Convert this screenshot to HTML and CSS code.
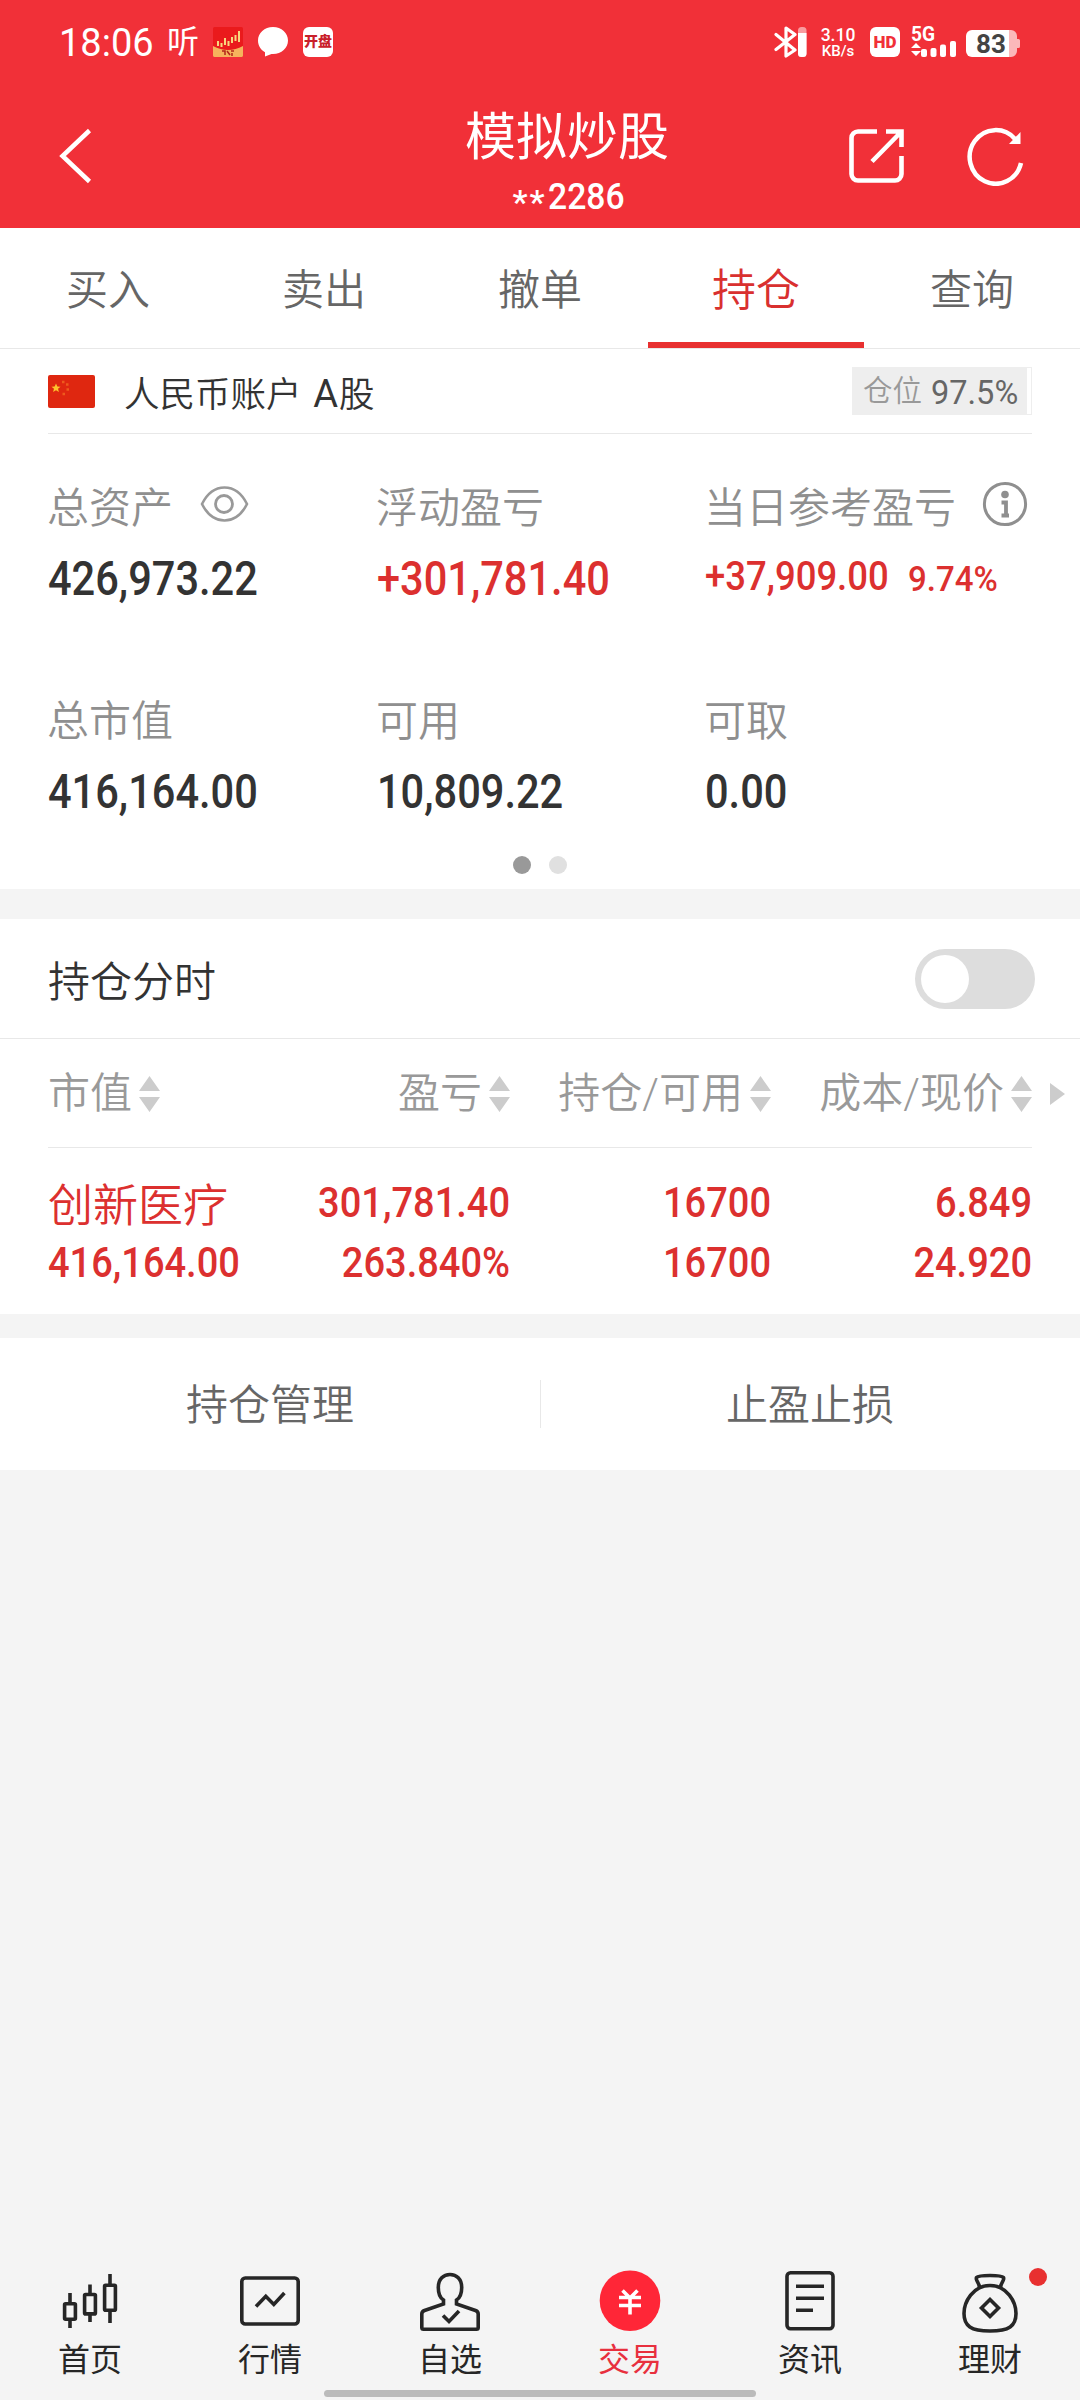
FILE: index.html
```html
<!DOCTYPE html>
<html lang="zh-CN">
<head>
<meta charset="utf-8">
<title>模拟炒股</title>
<link rel="stylesheet" href="styles.css">
</head>
<body>
<header class="top">
  <div class="status">
    <div class="status-left">
      <span class="clock">18:06</span>
      <span class="listen">听</span>
      <svg class="app" viewBox="0 0 30 30"><rect width="30" height="30" rx="1.5" fill="#ea1a1c"/><path d="M0 19Q15 27 30 19V28.500Q30 30 28.500 30H1.500Q0 30 0 28.500Z" fill="#f6b35c"/><path d="M5 14v5M8.500 16v4M12 11v7M15.500 14v5M19 10v6M22.500 8v6M26 4v11" stroke="#f8d77e" stroke-width="2"/><path d="M9 24h3v4M14 24l3 4M18 24h3M19 26v3" stroke="#b3261a" stroke-width="1.500" fill="none"/></svg>
      <svg class="app" viewBox="0 0 30 30"><path d="M15 0C6.500 0 0 6 0 13.500 0 19 3 23 7 25.200V29.500L13.500 27H15C23.500 27 30 21 30 13.500S23.500 0 15 0Z" fill="#fff"/></svg>
      <span class="app kaipan">开盘</span>
    </div>
    <div class="status-right">
      <svg width="34" height="32" viewBox="0 0 34 32"><path d="M2 8.500L21 24 12 30V2l9 6.500L2 23.500" fill="none" stroke="#fff" stroke-width="3.200" stroke-linejoin="round" stroke-linecap="round"/><rect x="24" y="1" width="8.500" height="30" rx="3.500" fill="#f99b9f"/><path d="M24 7h8.500v20.500a3.500 3.500 0 0 1-3.500 3.500h-1.500a3.500 3.500 0 0 1-3.500-3.500Z" fill="#fff"/></svg>
      <span class="speed"><b>3.10</b><b>KB/s</b></span>
      <span class="hd">HD</span>
      <svg class="signal" width="46" height="44" viewBox="0 -6 46 44"><text x="0" y="15" class="fiveg" textLength="24" lengthAdjust="spacingAndGlyphs">5G</text><path d="M0 22l5-5 5 5ZM0 25l5 5 5-5Z" fill="#fff"/><rect x="10" y="23" width="6" height="8" rx="2" fill="#fff"/><rect x="19.500" y="22" width="6" height="9" rx="2" fill="#fff"/><rect x="29" y="18.500" width="6" height="12.500" rx="2" fill="#fff"/><rect x="39" y="15" width="6" height="16" rx="2" fill="#fff"/></svg>
      <svg width="55" height="32" viewBox="0 0 55 32"><path d="M43 4h2a6 6 0 0 1 6 6v3h1.500a1.500 1.500 0 0 1 1.500 1.500v6a1.500 1.500 0 0 1-1.500 1.500H51v3a6 6 0 0 1-6 6h-2Z" fill="#fbb8ba"/><path d="M6 4h37v27H6a6 6 0 0 1-6-6V10a6 6 0 0 1 6-6Z" fill="#fff"/><text x="10" y="27" class="level" textLength="30">83</text></svg>
    </div>
  </div>
  <div class="bar">
    <svg class="back" width="36" height="60" viewBox="0 0 36 60"><path d="M31.500 4.500L4.500 30l27 25.500" fill="none" stroke="#fff" stroke-width="4.500"/></svg>
    <div class="heading"><h1>模拟炒股</h1><p><i>**</i><span class="num sub">2286</span></p></div>
    <svg class="share" width="56" height="56" viewBox="0 0 56 56"><path d="M28 3.500H9a6.500 6.500 0 0 0-6.500 6.500v36A6.500 6.500 0 0 0 9 52.500h37a6.500 6.500 0 0 0 6.500-6.500V28M37 3.500h15.500V19M52.500 3.500L23 33.500" fill="none" stroke="#fff" stroke-width="4.600"/></svg>
    <svg class="refresh" width="60" height="60" viewBox="0 0 60 60"><path d="M54 37A26 26.800 0 1 1 48 13" fill="none" stroke="#fff" stroke-width="4.500"/><path d="M53.500 6v12H42Z" fill="#fff"/></svg>
  </div>
</header>

<nav class="tabs"><a>买入</a><a>卖出</a><a>撤单</a><a class="on">持仓</a><a>查询</a></nav>

<section class="panel">
  <div class="account">
    <svg class="flag" width="47" height="33" viewBox="0 0 47 33"><rect width="47" height="33" rx="2" fill="#df2710"/><path d="M8 8.500l1.300 3 3.200.2-2.500 2 .9 3.200L8 15.200l-2.900 1.700.9-3.200-2.500-2 3.200-.2Z" fill="#fdc32c"/><path d="M14 7h2.500M18 9.500h2.500M18.500 14.500H21M14.500 19H17" stroke="#ee5a1d" stroke-width="2.500"/></svg>
    <span class="name">人民币账户 <b>A</b>股</span>
    <span class="badge"><span class="badge-in">仓位<b>97.5%</b></span></span>
  </div>
  <div class="assets">
    <div class="cell"><div class="label">总资产<svg class="eye" width="49" height="38" viewBox="0 0 49 38"><path d="M2 19C8 7 16 2.500 24.500 2.500S41 7 47 19C41 31 33 35.500 24.500 35.500S8 31 2 19Z" fill="none" stroke="#999" stroke-width="2.600"/><circle cx="24" cy="19" r="8.500" fill="none" stroke="#999" stroke-width="2.800"/></svg></div><div class="value"><span class="num big">426,973.22</span></div></div>
    <div class="cell"><div class="label">浮动盈亏</div><div class="value red"><span class="num big">+301,781.40</span></div></div>
    <div class="cell"><div class="label">当日参考盈亏<svg class="info" width="46" height="46" viewBox="0 0 46 46"><circle cx="23" cy="23" r="20.600" fill="none" stroke="#8f8f8f" stroke-width="3"/><circle cx="23" cy="13.500" r="3.800" fill="#8f8f8f"/><path d="M19.500 21.500H24V34M19.500 34.500H27" fill="none" stroke="#8f8f8f" stroke-width="3.800"/></svg></div><div class="value red"><span class="num day">+37,909.00</span><span class="num pct">9.74%</span></div></div>
    <div class="cell"><div class="label">总市值</div><div class="value"><span class="num big">416,164.00</span></div></div>
    <div class="cell"><div class="label">可用</div><div class="value"><span class="num big">10,809.22</span></div></div>
    <div class="cell"><div class="label">可取</div><div class="value"><span class="num big">0.00</span></div></div>
  </div>
  <div class="dots"><i class="dot active"></i><i class="dot"></i></div>
</section>

<section class="holdings">
  <div class="toggle-row"><span>持仓分时</span><span class="switch"><i></i></span></div>
  <div class="grid head">
    <span>市值<svg class="sort" viewBox="0 0 21 36"><path d="M0 15L10.500 0 21 15ZM0 21h21L10.500 36Z"/></svg></span>
    <span>盈亏<svg class="sort" viewBox="0 0 21 36"><path d="M0 15L10.500 0 21 15ZM0 21h21L10.500 36Z"/></svg></span>
    <span>持仓/可用<svg class="sort" viewBox="0 0 21 36"><path d="M0 15L10.500 0 21 15ZM0 21h21L10.500 36Z"/></svg></span>
    <span>成本/现价<svg class="sort" viewBox="0 0 21 36"><path d="M0 15L10.500 0 21 15ZM0 21h21L10.500 36Z"/></svg></span>
    <svg class="more" viewBox="0 0 15 22"><path d="M0 0L15 11 0 22Z"/></svg>
  </div>
  <div class="grid stock">
    <span class="stock-name">创新医疗</span><span class="num">301,781.40</span><span class="num">16700</span><span class="num">6.849</span>
    <span class="num">416,164.00</span><span class="num">263.840%</span><span class="num">16700</span><span class="num">24.920</span>
  </div>
</section>

<section class="actions"><a>持仓管理</a><a>止盈止损</a></section>

<footer class="dock">
  <nav class="dock-nav">
    <a><svg viewBox="0 0 180 80"><rect x="64.600" y="43.800" width="10.800" height="15.400" rx="1"/><rect x="84.600" y="34.500" width="10.800" height="19.400" rx="1"/><rect x="104.600" y="25.200" width="10.800" height="25" rx="1"/><path d="M70 33v10M70 60v8M90 24.500v10M90 54v8M110 14v11M110 51v12"/></svg>首页</a>
    <a><svg viewBox="0 0 180 80"><rect x="61.800" y="18" width="56.400" height="46" rx="3.500"/><path d="M76 46.500l9.800-10.200 8 8.200 10.600-11.500"/></svg>行情</a>
    <a><svg viewBox="0 0 180 80"><path d="M83.500 40C80 38 78.300 33 78.300 27.500 78.300 19 83.500 14.500 90 14.500S101.700 19 101.700 27.500C101.700 33 100 38 96.500 40V44L115.500 50.500Q118.200 51.500 118.200 54V67.500Q118.200 69.200 116.500 69.200H63.500Q61.800 69.200 61.800 67.500V54Q61.800 51.500 64.500 50.500L83.500 44Z"/><path d="M83 55.500l6 6 10-10.500"/></svg>自选</a>
    <a class="on"><svg viewBox="0 0 180 80"><circle cx="90" cy="40.700" r="30.300"/><path d="M82.500 30.500l7.500 7.500 7.500-7.500M79 37.500h22M79 45.500h22M90 37v17.500"/></svg>交易</a>
    <a><svg viewBox="0 0 180 80"><rect x="67" y="12.800" width="46" height="56" rx="3.500"/><path d="M76 26.300h28M76 38.300h28M76 50.200h17"/></svg>资讯</a>
    <a><svg viewBox="0 0 180 80"><path d="M79.500 27.500C79.500 23 75 20 76.500 17.500 79 14.800 101 14.800 103.500 17.500 105 20 100.500 23 100.500 27.500"/><path d="M90 25.500C73 25.500 64 42 64 53.500 64 66 71 71 90 71S116 66 116 53.500C116 42 107 25.500 90 25.500ZM90 39.500l8.500 8.500-8.500 8.500-8.500-8.500Z"/></svg>理财<i class="unread"></i></a>
  </nav>
  <div class="home-bar"></div>
</footer>
</body>
</html>
```
FILE: styles.css
```css
* { box-sizing: border-box; margin: 0; padding: 0; }
body {
  width: 1080px; height: 2400px; display: flex; flex-direction: column;
  background: #f4f4f4; color: #333; overflow: hidden;
  font-family: Roboto, "Noto Sans CJK SC", sans-serif; font-size: 42px; font-weight: 350;
}
i, b { font-style: normal; font-weight: inherit; }
svg { display: block; flex: none; }
span { white-space: nowrap; }

.top { height: 228px; background: #f13038; color: #fff; }
.status { height: 84px; padding: 0 59px 0 59px; display: flex; justify-content: space-between; align-items: center; }
.status-left, .status-right { display: flex; align-items: center; }
.clock { width: 108px; font-size: 38px; font-weight: 400; padding-top: 2px; }
.listen { width: 46px; font-size: 32px; line-height: 32px; font-weight: 400; }
.app { width: 30px; height: 30px; margin-right: 15px; }
.kaipan { border-radius: 6px; background: #fff; color: #c9202a; font-size: 14px; font-weight: 900; line-height: 29px; text-align: center; }
.speed { width: 40px; margin-left: 10px; display: flex; flex-direction: column; font-size: 15px; line-height: 15px; font-weight: 500; text-align: center; }
.speed b:first-child { font-size: 17.500px; line-height: 18px; }
.hd { width: 30px; height: 30px; margin-left: 12px; border-radius: 6px; background: #fff; color: #f13038; font-size: 17px; line-height: 30px; font-weight: 900; text-align: center; }
.signal { margin-left: 11px; margin-right: 9px; }
.fiveg { fill: #fff; font-size: 20px; font-weight: 700; }
.level { fill: #444; font-size: 26px; font-weight: 700; }

.bar { height: 144px; display: flex; padding-left: 58px; }
.back { margin-top: 42px; }
.heading { width: 202px; margin-left: 372px; text-align: center; }
h1 { margin-top: 17px; font-size: 51px; line-height: 74px; font-weight: 400; white-space: nowrap; margin-left: -1px; }
.heading p { height: 40px; display: flex; align-items: center; padding-left: 45px; margin-top: 2px; font-size: 37px; font-weight: 500; line-height: 40px; }
.heading i { width: 37px; letter-spacing: 2px; padding-top: 10px; font-size: 34px; }
.share { margin: 44px 0 0 181px; }
.refresh { margin: 42px 0 0 62px; }

.num { display: inline-block; font-weight: 500; transform-origin: 0 50%; transform: scaleX(.91); }
.big { font-size: 47.500px; transform: scaleX(.875); }
.day { font-size: 41px; transform: scaleX(.89); }
.pct { font-size: 35.500px; transform: scaleX(.93); }

.tabs { height: 121px; display: grid; grid-template-columns: repeat(5, 1fr); background: #fff; border-bottom: 1px solid #e8e8e8; color: #666; }
.tabs a { text-align: center; line-height: 126px; height: 120px; }
.tabs .on { color: #d9302f; font-size: 44px; border-bottom: 6px solid #e83030; }

.panel { height: 540px; background: #fff; padding: 0 48px; }
.account { height: 85px; display: flex; align-items: center; border-bottom: 1px solid #e8e8e8; font-size: 35.500px; }
.name { margin-left: 29px; }
.name b { display: inline-block; margin: 0 1px 0 3px; font-weight: 400; font-size: 38px; line-height: 38px; }
.badge { margin-left: auto; height: 48px; padding-right: 4px; border: 1px solid #eee; border-left: 0; }
.badge-in { display: flex; align-items: center; width: 175px; height: 46px; padding-left: 11px; background: #eee; color: #999; font-size: 29.500px; line-height: 44px; }
.badge b { margin-left: 9px; padding-top: 4px; color: #666; font-size: 32.500px; font-weight: 400; }
.assets { display: grid; grid-template-columns: 329px 328px 1fr; grid-auto-rows: 213px; padding-top: 38px; height: 415px; }
.label { height: 64px; display: flex; align-items: center; color: #8f8f8f; white-space: nowrap; margin-left: -1px; }
.eye { margin-left: 27px; }
.info { margin-left: 26px; }
.value { height: 80px; line-height: 82px; display: flex; align-items: center; margin-top: 3px; }
.value.red, .stock { color: #dc302f; }
.day { width: 203px; position: relative; top: -3px; }
.dots { display: flex; justify-content: center; gap: 18px; padding-top: 7px; }
.dot { width: 18px; height: 18px; border-radius: 50%; background: #e0e0e0; }
.dot.active { background: #999; }

.holdings { height: 395px; margin-top: 30px; background: #fff; }
.toggle-row { height: 120px; padding: 0 45px 0 48px; display: flex; align-items: center; justify-content: space-between; border-bottom: 1px solid #e8e8e8; }
.switch { width: 120px; height: 60px; padding: 6px; border-radius: 30px; background: #ddd; }
.switch i { display: block; width: 48px; height: 48px; border-radius: 50%; background: #fff; }
.grid { display: grid; grid-template-columns: 201px 261px 261px 261px; margin-left: 48px; }
.head { grid-template-columns: 201px 261px 261px 261px 33px; height: 109px; align-items: center; color: #999; background: linear-gradient(#e8e8e8, #e8e8e8) 0 100% / 984px 1px no-repeat; line-height: 58px; }
.head span { display: flex; align-items: center; justify-content: flex-end; }
.head span:first-child { justify-content: flex-start; }
.sort { width: 21px; height: 36px; margin-left: 7px; fill: #ccc; }
.more { width: 15px; height: 22px; margin-left: 18px; fill: #ccc; }
.stock { grid-template-rows: 60px 60px; padding-top: 24px; font-size: 42px; line-height: 61px; }
.stock .num { text-align: right; transform-origin: 100% 50%; transform: scaleX(.905); }
.stock .num:nth-child(5) { text-align: left; transform-origin: 0 50%; }
.stock-name { font-size: 45px; line-height: 70px; }

.actions { height: 132px; margin-top: 24px; display: grid; grid-template-columns: 1fr 1fr; background: linear-gradient(#e8e8e8, #e8e8e8) 50% 42px / 1px 48px no-repeat #fff; color: #666; line-height: 136px; text-align: center; }

.dock { margin-top: auto; height: 140px; }
.dock-nav { height: 130px; display: grid; grid-template-columns: repeat(6, 180px); font-size: 32px; color: #262626; font-weight: 400; }
.dock-nav a { position: relative; text-align: center; line-height: 40px; }
.dock-nav svg { width: 180px; height: 80px; fill: none; stroke: #262626; stroke-width: 3.600; }
.dock-nav .on { color: #e8303e; }
.dock-nav .on circle { fill: #ff2637; stroke: none; }
.dock-nav .on svg { stroke: #fff; }
.unread { position: absolute; left: 129px; top: 8px; width: 18px; height: 18px; border-radius: 50%; background: #e83030; }
.home-bar { width: 432px; height: 7px; margin: 0 auto; border-radius: 4px; background: #bbb; }
```
